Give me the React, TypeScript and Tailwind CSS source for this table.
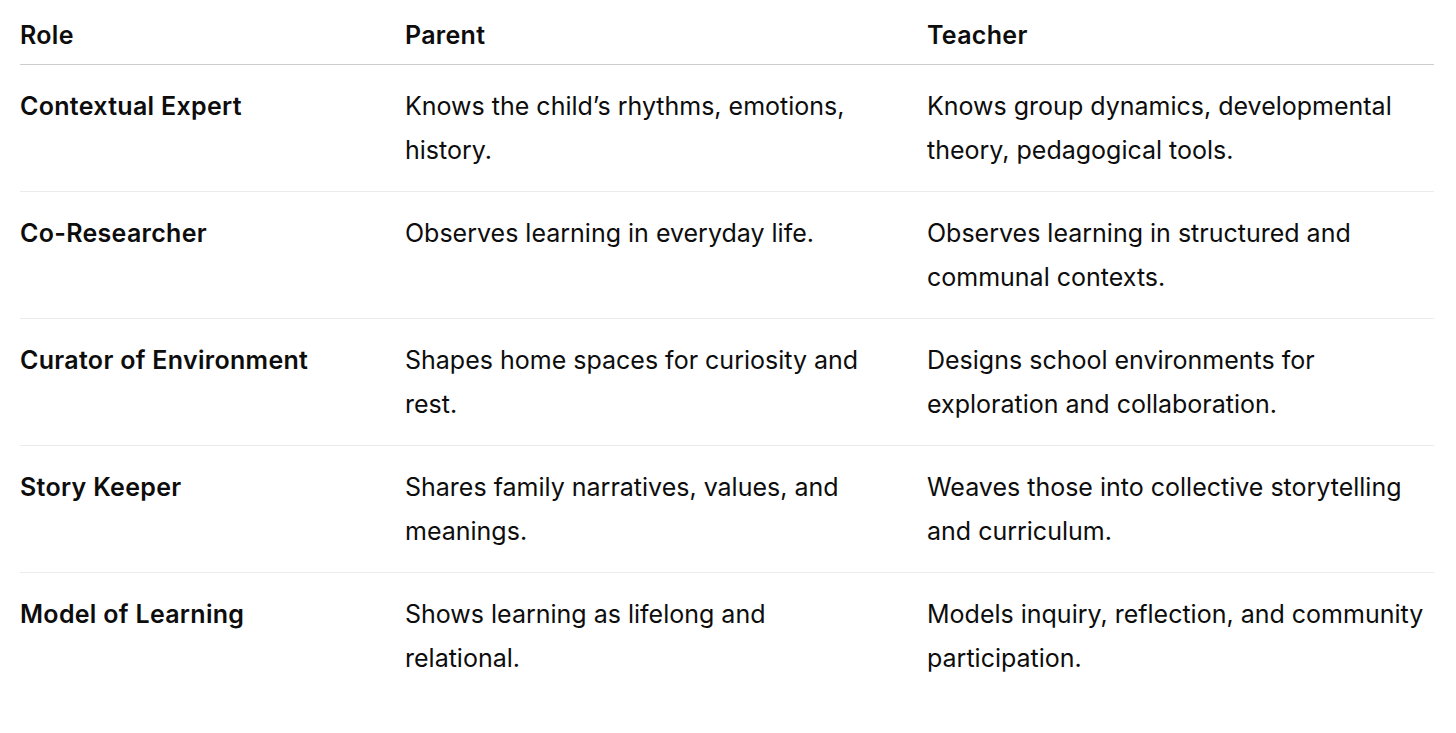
import React from 'react';

type Row = { role: string; parent: string; teacher: string };

const rows: Row[] = [
  {
    role: 'Contextual Expert',
    parent: 'Knows the child’s rhythms, emotions, history.',
    teacher: 'Knows group dynamics, developmental theory, pedagogical tools.',
  },
  {
    role: 'Co-Researcher',
    parent: 'Observes learning in everyday life.',
    teacher: 'Observes learning in structured and communal contexts.',
  },
  {
    role: 'Curator of Environment',
    parent: 'Shapes home spaces for curiosity and rest.',
    teacher: 'Designs school environments for exploration and collaboration.',
  },
  {
    role: 'Story Keeper',
    parent: 'Shares family narratives, values, and meanings.',
    teacher: 'Weaves those into collective storytelling and curriculum.',
  },
  {
    role: 'Model of Learning',
    parent: 'Shows learning as lifelong and relational.',
    teacher: 'Models inquiry, reflection, and community participation.',
  },
];

const cols = 'grid grid-cols-[385px_522px_507px]';

export default function App() {
  return (
    <div className="min-h-[733px] bg-white px-5 font-['Inter',sans-serif] text-[25px] leading-[44px] text-[#0d0d0d]">
      <div className="w-[1414px]">
        <div className={`${cols} border-b border-[#cdcdcd] pt-[13px] pb-[7px] font-semibold tracking-[0.3px]`}>
          <div>Role</div>
          <div>Parent</div>
          <div>Teacher</div>
        </div>
        {rows.map((r, i) => (
          <div
            key={r.role}
            className={`${cols} py-[19px] ${i < rows.length - 1 ? 'border-b border-[#ececec]' : ''}`}
          >
            <div className="pr-6 font-semibold tracking-[0.3px]">{r.role}</div>
            <div className="pr-[56px]">{r.parent}</div>
            <div>{r.teacher}</div>
          </div>
        ))}
      </div>
    </div>
  );
}
